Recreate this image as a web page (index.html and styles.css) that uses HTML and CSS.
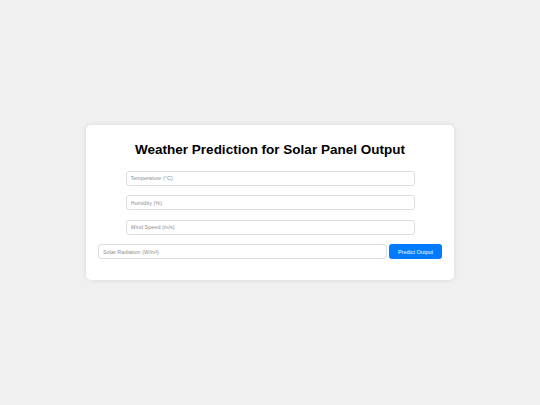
FILE: index.html
```html
<!DOCTYPE html>
<html lang="en">
<head>
  <meta charset="UTF-8">
  <meta name="viewport" content="width=device-width, initial-scale=1.0">
  <title>Weather Prediction for Solar Panel Output</title>
  <link rel="stylesheet" href="styles.css">
</head>
<body>
  <div class="container">
    <h1>Weather Prediction for Solar Panel Output</h1>
    <input type="number" class="field" id="temperature" placeholder="Temperature (°C)">
    <input type="number" class="field" id="humidity" placeholder="Humidity (%)">
    <input type="number" class="field" id="wind-speed" placeholder="Wind Speed (m/s)">
    <div class="predict-row">
      <input type="number" class="field" id="radiation" placeholder="Solar Radiation (W/m²)">
      <button class="predict-btn" id="predict">Predict Output</button>
    </div>
  </div>
</body>
</html>
```

FILE: styles.css
```css
body {
  font-family: "Liberation Sans", Arial, sans-serif;
  margin: 0;
  padding: 0;
  background-color: #f0f0f0;
  display: flex;
  justify-content: center;
  align-items: center;
  height: 100vh;
}

.container {
  background-color: #ffffff;
  border-radius: 5px;
  box-shadow: 0 0 5px rgba(0, 0, 0, 0.1);
  width: 368px;
  box-sizing: border-box;
  padding: 17px 10px 21px;
  display: flex;
  flex-direction: column;
  align-items: center;
}

h1 {
  font-size: 13.5px;
  line-height: 16px;
  font-weight: bold;
  color: #000;
  margin: 0 0 13px;
  text-align: center;
}

.field {
  width: 289px;
  height: 15px;
  box-sizing: border-box;
  margin: 0 0 9.5px;
  padding: 0 4px;
  font-family: "Liberation Sans", Arial, sans-serif;
  font-size: 5.5px;
  border: 1px solid #dddddd;
  border-radius: 3px;
  outline: none;
}

.field::placeholder {
  color: #909090;
}

.predict-row {
  display: flex;
  gap: 2px;
  justify-content: center;
}

.predict-row .field {
  margin: 0;
}

.predict-btn {
  width: 53px;
  height: 15px;
  padding: 0;
  font-family: "Liberation Sans", Arial, sans-serif;
  font-size: 5.5px;
  color: #ffffff;
  background-color: #007bff;
  border: none;
  border-radius: 3px;
  cursor: pointer;
}
```
